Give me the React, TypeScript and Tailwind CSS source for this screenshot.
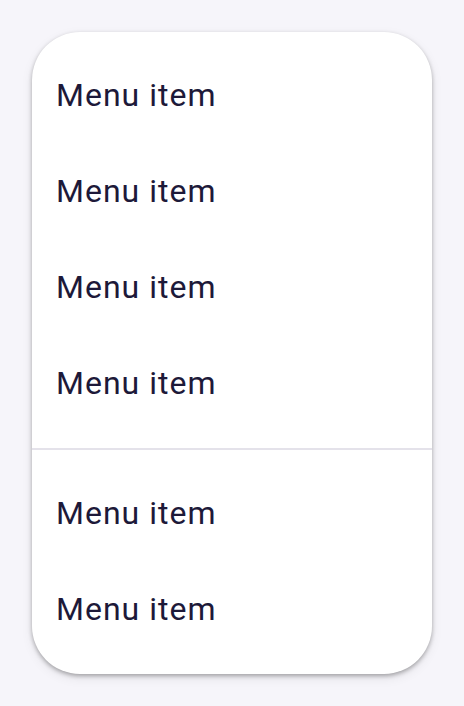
const groups = [
  ["Menu item", "Menu item", "Menu item", "Menu item"],
  ["Menu item", "Menu item"],
];

function MenuRow({ label }: { label: string }) {
  return (
    <div className="flex h-24 items-center px-6 pb-0.5 text-[32px] leading-none tracking-[1px] text-[#1d1939]">
      {label}
    </div>
  );
}

export default function App() {
  return (
    <div className="min-h-screen w-full bg-[#f6f5fa] p-8" style={{ fontFamily: "Roboto, 'Noto Sans', sans-serif" }}>
      <div className="w-[400px] overflow-hidden rounded-[48px] bg-white shadow-[0_2px_4px_rgba(0,0,0,0.3),0_4px_12px_rgba(0,0,0,0.08)]">
        {groups.map((items, gi) => (
          <div key={gi}>
            {gi > 0 && <div className="h-[2px] bg-[#e4e2ea]" />}
            <div className="py-4">
              {items.map((label, i) => (
                <MenuRow key={i} label={label} />
              ))}
            </div>
          </div>
        ))}
      </div>
    </div>
  );
}
